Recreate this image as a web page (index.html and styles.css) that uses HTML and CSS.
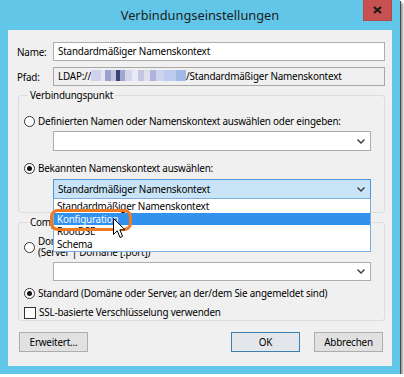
FILE: index.html
```html
<!DOCTYPE html>
<html>
<head>
    <title>Verbindungseinstellungen</title>
    <link rel="stylesheet" href="styles.css">
</head>
<body>
    <div class="window">
        <div class="titlebar">
            <span></span>
            <span class="title">Verbindungseinstellungen</span>
            <span class="close">
                <svg width="9" height="8" viewBox="0 0 9 8"><path d="M1 1 L8 7 M8 1 L1 7" stroke="#1a1a1a" stroke-width="2.2" fill="none"/></svg>
            </span>
        </div>
        <div class="content">
            <div class="row">
                <span class="label">Name:</span>
                <div class="textbox">Standardmäßiger Namenskontext</div>
            </div>
            <div class="row">
                <span class="label">Pfad:</span>
                <div class="textbox readonly">LDAP://<span class="blur"></span>/Standardmäßiger Namenskontext</div>
            </div>

            <fieldset class="group group-top">
                <legend>Verbindungspunkt</legend>
                <div class="option">
                    <span class="radio"></span>
                    <span>Definierten Namen oder Namenskontext auswählen oder eingeben:</span>
                </div>
                <div class="combo combo-first">
                    <span class="combo-text"></span>
                    <svg class="chevron" width="8" height="5" viewBox="0 0 8 5"><path d="M0.5 0.5 L4 4 L7.5 0.5" stroke="#3a3a3a" stroke-width="1.4" fill="none"/></svg>
                </div>
                <div class="option option-second">
                    <span class="radio checked"></span>
                    <span>Bekannten Namenskontext auswählen:</span>
                </div>
                <div class="combo open">
                    <span class="combo-text">Standardmäßiger Namenskontext</span>
                    <svg class="chevron" width="8" height="5" viewBox="0 0 8 5"><path d="M0.5 0.5 L4 4 L7.5 0.5" stroke="#3a3a3a" stroke-width="1.4" fill="none"/></svg>
                    <ul class="dropdown">
                        <li>Standardmäßiger Namenskontext</li>
                        <li class="selected">Konfiguration</li>
                        <li>RootDSE</li>
                        <li>Schema</li>
                        <span class="marker"></span>
                        <svg class="cursor" width="13" height="21" viewBox="0 0 13 21"><path d="M0.5 0.5 L0.5 16.5 L4.3 12.8 L7 19.5 L9.6 18.4 L6.9 11.8 L12 11.8 Z" fill="#fff" stroke="#000" stroke-width="1" stroke-linejoin="miter"/></svg>
                    </ul>
                </div>
            </fieldset>

            <fieldset class="group group-bottom">
                <legend>Computer</legend>
                <div class="option two-lines">
                    <span class="radio"></span>
                    <span>Domäne oder Server auswählen oder eingeben:<br>(Server | Domäne [:port])</span>
                </div>
                <div class="combo combo-third">
                    <span class="combo-text"></span>
                    <svg class="chevron" width="8" height="5" viewBox="0 0 8 5"><path d="M0.5 0.5 L4 4 L7.5 0.5" stroke="#3a3a3a" stroke-width="1.4" fill="none"/></svg>
                </div>
                <div class="option option-standard">
                    <span class="radio checked"></span>
                    <span>Standard (Domäne oder Server, an der/dem Sie angemeldet sind)</span>
                </div>
                <div class="option option-ssl">
                    <span class="checkbox"></span>
                    <span>SSL-basierte Verschlüsselung verwenden</span>
                </div>
            </fieldset>

            <div class="buttons">
                <button class="btn">Erweitert...</button>
                <button class="btn btn-default">OK</button>
                <button class="btn">Abbrechen</button>
            </div>
        </div>
    </div>
</body>
</html>
```

FILE: styles.css
```css
body {
    margin: 0;
    background-color: #fff;
    font-family: "Noto Sans", sans-serif;
    font-size: 9.9px;
    letter-spacing: -0.2px;
    color: #000;
}

.window {
    width: 384px;
    padding: 0 8px 8px;
    background-color: #62c6e8;
    box-shadow: 1px 1px 0 #4a4a4a, 3px 3px 2px rgba(0,0,0,0.4);
}

.titlebar {
    height: 30px;
    display: grid;
    grid-template-columns: 1fr auto 1fr;
}

.title {
    font-size: 12.8px;
    letter-spacing: 0;
    line-height: 30px;
    color: #1d1d1d;
}

.close {
    justify-self: end;
    width: 29px;
    height: 21px;
    box-sizing: border-box;
    background-color: #c75050;
    border: 1px solid #b54848;
    border-top: 0;
    display: flex;
    justify-content: center;
    align-items: center;
}

.content {
    height: 336px;
    box-sizing: border-box;
    padding-top: 12px;
    background-color: #f0f0f0;
    overflow: hidden;
}

.row {
    display: flex;
    align-items: center;
    padding-left: 9px;
}

.row + .row {
    margin-top: 6px;
}

.label {
    width: 36px;
}

.textbox {
    width: 332px;
    height: 19px;
    box-sizing: border-box;
    border: 1px solid #abadb3;
    background-color: #fff;
    padding-left: 4px;
    line-height: 17px;
    white-space: nowrap;
    overflow: hidden;
}

.textbox.readonly {
    background-color: #f0f0f0;
    border-color: #a8a8a8;
}

.blur {
    display: inline-block;
    width: 95px;
    height: 11px;
    vertical-align: -1px;
    background: linear-gradient(90deg, #cfd2ea 0 10px, #e4e5f0 10px 14px, #9ca0cc 14px 20px, #c3c6e2 20px 25px, #3c4178 25px 29px, #a2a7d2 29px 34px, #d4d7ec 34px 41px, #eaeaf2 41px 47px, #c2c6e2 47px 53px, #dfe0ec 53px 59px, #aeb4dc 59px 65px, #cdd4ee 65px 73px, #bccbee 73px 85px, #a3b9e8 85px 95px);
}

.group {
    box-sizing: border-box;
    width: 367px;
    margin: 3px 0 0 10px;
    padding: 0 0 0 5px;
    border: 1px solid #dcdcdc;
    border-radius: 3px;
}

.group legend {
    margin-left: 4px;
    padding: 0 2px;
    line-height: 13px;
}

.group-top {
    padding-top: 13px;
    padding-bottom: 13px;
}

.group-bottom {
    margin-top: 3px;
    padding-top: 7px;
    padding-bottom: 1px;
}

.option {
    display: flex;
    align-items: center;
    gap: 3px;
    line-height: 13px;
    white-space: nowrap;
}

.option-second {
    margin-top: 11px;
}

.two-lines {
    line-height: 11px;
}

.option-standard {
    margin-top: 6px;
}

.option-ssl {
    margin-top: 6px;
}

.radio {
    width: 11px;
    height: 11px;
    box-sizing: border-box;
    border: 1px solid #333;
    border-radius: 50%;
    background-color: #fff;
    display: flex;
    justify-content: center;
    align-items: center;
    flex-shrink: 0;
}

.radio.checked::after {
    content: "";
    width: 5px;
    height: 5px;
    border-radius: 50%;
    background-color: #111;
}

.checkbox {
    width: 12px;
    height: 12px;
    box-sizing: border-box;
    border: 1px solid #333;
    background-color: #fff;
    flex-shrink: 0;
}

.combo {
    position: relative;
    width: 318px;
    height: 20px;
    box-sizing: border-box;
    margin: 3px 0 0 29px;
    border: 1px solid #acacac;
    background-color: #fff;
    display: flex;
    align-items: center;
    justify-content: space-between;
    padding: 0 5px 0 4px;
}

.combo.open {
    height: 20px;
    margin-top: 4px;
    background-color: #c8e4f6;
    border-color: #4d95d6;
}

.combo-third {
    height: 19px;
    margin-top: 4px;
}

.dropdown {
    position: absolute;
    left: -1px;
    top: 18px;
    width: 318px;
    margin: 0;
    padding: 1px 0 0;
    list-style: none;
    box-sizing: border-box;
    border: 1px solid #7aaee0;
    background-color: #fff;
    z-index: 2;
}

.dropdown li {
    line-height: 12.7px;
    padding-left: 3px;
}

.dropdown li.selected {
    background-color: #3391ee;
    color: #fff;
}

.marker {
    position: absolute;
    left: -4px;
    top: 10px;
    width: 82px;
    height: 22px;
    box-sizing: border-box;
    border: 3px solid #f07a22;
    border-radius: 8px;
}

.cursor {
    position: absolute;
    left: 59px;
    top: 19px;
}

.buttons {
    display: flex;
    gap: 14px;
    margin-top: 11px;
    padding: 0 9px 0 11px;
}

.btn {
    width: 69px;
    height: 20px;
    font-family: "Noto Sans", sans-serif;
    font-size: 9.9px;
    letter-spacing: -0.2px;
    padding: 0;
    background-color: #e1e1e1;
    border: 1px solid #adadad;
    color: #000;
}

.btn-default {
    margin-left: auto;
    border-color: #3c7fb1;
    background-color: #e3e6ea;
}
```
